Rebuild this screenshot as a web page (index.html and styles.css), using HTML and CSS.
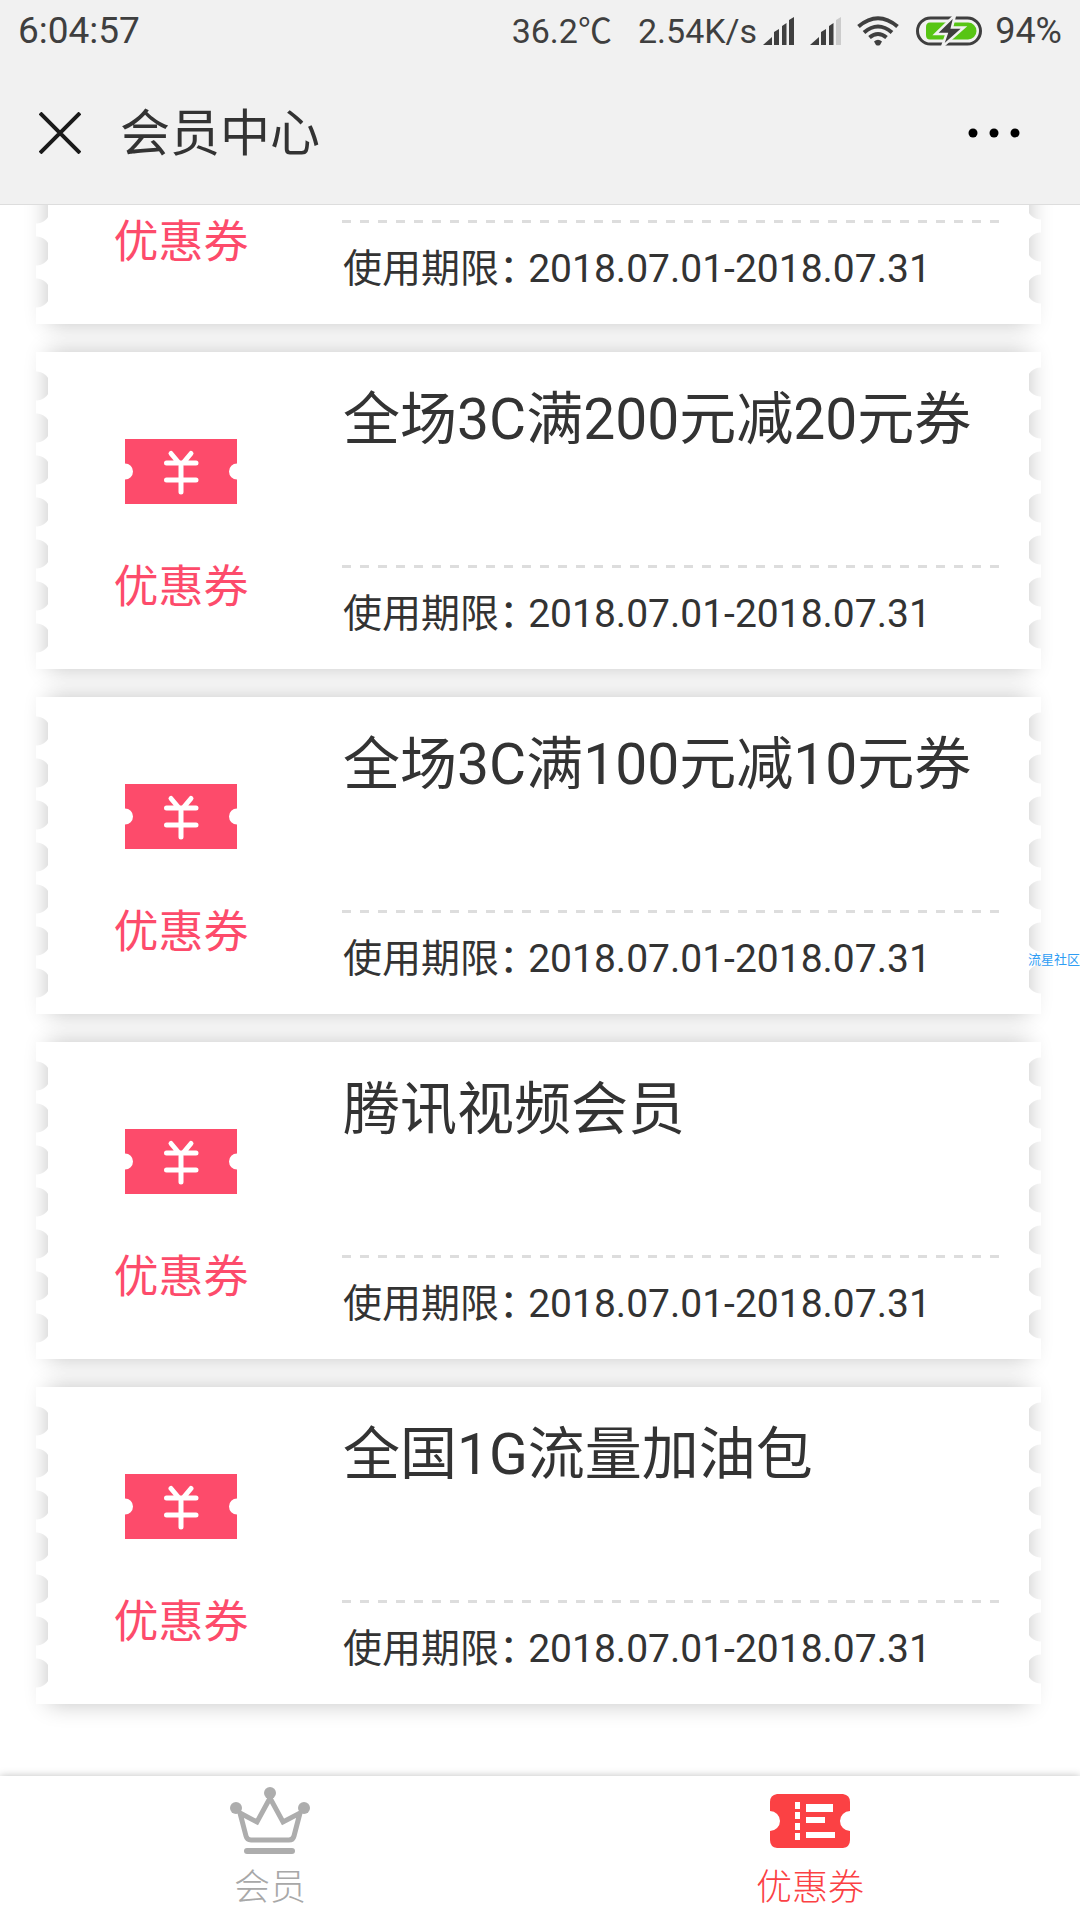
FILE: index.html
```
<!DOCTYPE html>
<html lang="zh-CN">
<head>
	<meta charset="UTF-8">
	<meta name="viewport" content="width=device-width, initial-scale=1">
	<title>会员中心</title>
	<link rel="stylesheet" href="styles.css">
</head>
<body>
	<!-- icons -->
	<svg class="defs" width="0" height="0">
		<symbol id="yuan" viewBox="0 0 112 65">
			<path fill="#fd4b6b" d="M0 0H112V24.500A8 8 0 0 0 112 40.500V65H0V40.500A8 8 0 0 0 0 24.500Z"/>
			<path fill="none" stroke="#fff" stroke-width="5" stroke-linecap="round" stroke-linejoin="round" d="M46 14.500L54 24M66 14.500L58 24M41.500 24H71M41.500 41H71M56 25V53"/>
		</symbol>
	</svg>

	<header class="header">
		<div class="status">
			<span class="time">6:04:57</span>
			<span class="temp">36.2℃</span>
			<span class="speed">2.54K/s</span>
			<svg class="signal" width="31" height="28" viewBox="0 0 31 28" fill="#3f3f3f"><path d="M0 28L9 20V28ZM11 15L16 12V28H11ZM19 9L23.500 6V28H19ZM26 3L31 0V28H26Z"/></svg>
			<svg class="signal" width="31" height="28" viewBox="0 0 31 28" fill="#3f3f3f"><path d="M0 28L9 20V28ZM11 15L16 12V28H11ZM19 9L23.500 6V28H19Z"/><path fill="#ccc" d="M26 3L31 0V28H26Z"/></svg>
			<svg class="wifi" width="42" height="30" viewBox="0 0 42 30"><path fill="none" stroke="#3f3f3f" stroke-width="4" d="M1.500 10.500Q21 -6 40.500 10.500M7 16.500Q21 4.500 35 16.500M12.500 21.500Q21 14.500 29.500 21.500"/><path fill="#3f3f3f" d="M17 25.500Q21 22 25 25.500L23 29Q21 30 19 29Z"/></svg>
			<svg class="battery" width="66" height="30" viewBox="0 0 66 30"><rect x="1.500" y="2" width="63" height="26" rx="13" fill="#f1f1f1" stroke="#3f3f3f" stroke-width="3"/><path fill="#57c514" d="M14 6.500H52A8.500 8.500 0 0 1 52 23.500H14Q10 23.500 10 19V11Q10 6.500 14 6.500Z"/><path fill="#3f3f3f" stroke="#f1f1f1" stroke-width="2.500" d="M39 -1L19.500 18H30.500L26 31L48 11.500H36Z"/></svg>
			<span class="percent">94%</span>
		</div>
		<div class="bar">
			<button class="close" aria-label="关闭"><svg width="42" height="42" viewBox="0 0 42 42"><path stroke="#1a1a1a" stroke-width="4" d="M1 1L41 41M41 1L1 41"/></svg></button>
			<h1>会员中心</h1>
			<button class="more" aria-label="更多"><svg width="52" height="10" viewBox="0 0 52 10"><circle cx="5" cy="5" r="4.500"/><circle cx="26" cy="5" r="4.500"/><circle cx="47" cy="5" r="4.500"/></svg></button>
		</div>
	</header>

	<main class="list">
		<section class="card">
			<div class="kind"><span>优惠券</span></div>
			<div class="info">
				<p><span class="label">使用期限：</span> 2018.07.01-2018.07.31</p>
			</div>
		</section>
		<section class="card">
			<div class="kind"><svg width="112" height="65"><use href="#yuan"/></svg><span>优惠券</span></div>
			<div class="info">
				<h2>全场3C满200元减20元券</h2>
				<p><span class="label">使用期限：</span> 2018.07.01-2018.07.31</p>
			</div>
		</section>
		<section class="card">
			<div class="kind"><svg width="112" height="65"><use href="#yuan"/></svg><span>优惠券</span></div>
			<div class="info">
				<h2>全场3C满100元减10元券</h2>
				<p><span class="label">使用期限：</span> 2018.07.01-2018.07.31</p>
			</div>
		</section>
		<section class="card">
			<div class="kind"><svg width="112" height="65"><use href="#yuan"/></svg><span>优惠券</span></div>
			<div class="info">
				<h2>腾讯视频会员</h2>
				<p><span class="label">使用期限：</span> 2018.07.01-2018.07.31</p>
			</div>
		</section>
		<section class="card">
			<div class="kind"><svg width="112" height="65"><use href="#yuan"/></svg><span>优惠券</span></div>
			<div class="info">
				<h2>全国1G流量加油包</h2>
				<p><span class="label">使用期限：</span> 2018.07.01-2018.07.31</p>
			</div>
		</section>
	</main>

	<nav class="tabs">
		<a href="#member">
			<svg width="80" height="68" viewBox="0 0 80 68"><g fill="#adadad"><circle cx="6" cy="21" r="6"/><circle cx="40" cy="6" r="6"/><circle cx="74" cy="21" r="6"/></g><path fill="none" stroke="#adadad" stroke-width="5" d="M10 26L27 35L40 11L53 35L70 26L64 49Q63 53 59 53H21Q17 53 16 49Z"/><path stroke="#adadad" stroke-width="6" stroke-linecap="round" d="M17 64H62"/></svg>
			<span>会员</span>
		</a>
		<a href="#coupon" class="active">
			<svg width="82" height="68" viewBox="0 0 82 68"><path fill="#fb4144" d="M8 7H74Q81 8 81 15V24A10 10 0 0 0 81 44V53Q81 60 74 61H8Q1 60 1 53V44A10 10 0 0 0 1 24V15Q1 8 8 7Z"/><path fill="#fff" d="M26 15H31V22H26ZM26 25H31V32H26ZM26 36H31V43H26ZM26 46H31V53H26ZM37 17H64V25H37ZM37 30H56V36H37ZM37 45H66V51H37Z"/></svg>
			<span>优惠券</span>
		</a>
	</nav>

	<div class="mark">流星社区</div>
</body>
</html>
```
FILE: styles.css
```
*{margin:0;padding:0;box-sizing:border-box;}
body{height:100vh;display:flex;flex-direction:column;position:relative;overflow:hidden;background:#fff;color:#333;font-family:Roboto,"Noto Sans CJK SC",sans-serif;}
svg{display:block;flex:none;}
button{border:0;background:none;}
.defs{position:absolute;}

/* header */
.header{flex:none;background:#f1f1f1;border-bottom:1px solid #ddd;}
.status{display:flex;align-items:center;height:62px;padding:0 18px;font-size:34px;line-height:40px;color:#3f3f3f;}
.time{margin-right:auto;font-size:37px;}
.speed{margin:0 6px 0 26px;}
.signal{margin-right:16px;}
.wifi{margin-right:17px;}
.battery{margin-right:13px;}
.percent{font-size:36px;}
.bar{display:flex;align-items:center;height:142px;padding:0 60px 0 39px;}
.bar h1{margin:0 auto 0 39px;padding-top:2px;font-size:50px;line-height:60px;font-weight:400;}

/* coupon list */
.list{flex:1;min-height:0;display:flex;flex-direction:column;justify-content:flex-end;gap:28px;padding:0 51px 72px 48px;overflow:hidden;}
.card{flex:none;position:relative;display:flex;height:317px;background:#fff;box-shadow:0 0 22px rgba(0,0,0,.24);}
.card:before,.card:after{content:"";position:absolute;top:0;bottom:0;width:12px;}
.card:before{right:100%;background:linear-gradient(#fff,#fff) top/12px 13px no-repeat,linear-gradient(#fff,#fff) bottom/12px 12px no-repeat,radial-gradient(circle at 0 21px,transparent 14px,#fff 15px) 0 13px/12px 42px repeat-y;}
.card:after{left:100%;background:linear-gradient(#fff,#fff) top/12px 10px no-repeat,linear-gradient(#fff,#fff) bottom/12px 12px no-repeat,radial-gradient(circle at 12px 21px,transparent 14px,#fff 15px) 0 9px/12px 42px repeat-y;}
.kind{flex:none;width:266px;display:flex;flex-direction:column;align-items:center;padding:87px 0 51px;font-size:45px;line-height:60px;color:#fd4b6b;}
.kind span{margin-top:auto;}
.info{flex:1;display:flex;flex-direction:column;padding:32px 30px 0 28px;}
.info h2{padding-left:1px;font-size:57px;line-height:72px;font-weight:400;white-space:nowrap;}
.info p{margin-top:auto;height:104px;padding:24px 0 0 1px;font-size:39px;line-height:50px;white-space:nowrap;background:repeating-linear-gradient(90deg,#ddd 0 9px,transparent 9px 18px) top/100% 3px no-repeat;}
.label{font-feature-settings:"halt";}

/* bottom tabs */
.tabs{flex:none;display:flex;height:144px;background:#fff;box-shadow:0 0 8px rgba(0,0,0,.25);position:relative;}
.tabs a{flex:1;display:flex;flex-direction:column;align-items:center;padding-top:11px;font-size:36px;line-height:48px;color:#a8a8a8;text-decoration:none;font-weight:300;}
.tabs span{margin-top:9px;}
.tabs .active{color:#fb4144;}

.mark{position:absolute;right:0;top:50%;font-size:13px;line-height:16px;margin-top:-8px;color:#2f9df4;}
```
